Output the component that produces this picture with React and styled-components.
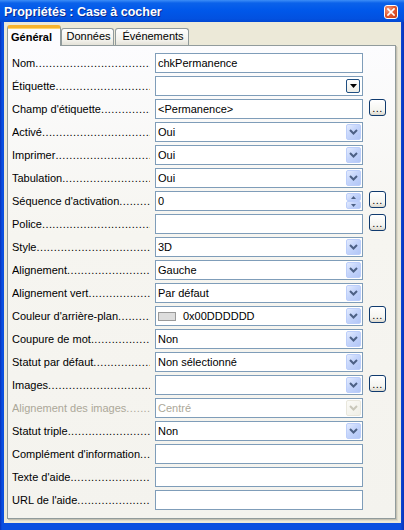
import React from 'react';
import styled, { createGlobalStyle } from 'styled-components';

const Global = createGlobalStyle`
  html, body { margin: 0; padding: 0; overflow: hidden; background: #0846d8; }
  * { box-sizing: border-box; }
`;

const FONT = `"Liberation Sans", Arial, sans-serif`;

const Window = styled.div`
  width: 404px;
  height: 530px;
  display: flex;
  flex-direction: column;
  background: linear-gradient(to right, #0831b8 0, #0a4fe0 2px, #0a4fe0 400px, #0831b8 404px);
  font-family: ${FONT};
  font-size: 11px;
  color: #000;
`;

const TitleBar = styled.div`
  height: 22px;
  flex: none;
  display: flex;
  align-items: center;
  padding: 1px 6px 0 4px;
  background: linear-gradient(to bottom, #3d8ef7 0, #0b62ea 3px, #0058ea 45%, #0251e0 85%, #0147d2 100%);
`;

const Title = styled.div`
  flex: 1;
  color: #fff;
  font-weight: bold;
  font-size: 12.5px;
  text-shadow: 1px 1px 0 #0a2a8c;
  white-space: nowrap;
`;

const CloseButton = styled.div`
  width: 14px;
  height: 14px;
  border: 1px solid #fff;
  border-radius: 3px;
  background: radial-gradient(circle at 30% 30%, #f39a7c 0, #e0542c 55%, #c23a14 100%);
  display: flex;
  align-items: center;
  justify-content: center;
`;

const Client = styled.div`
  flex: 1;
  margin: 0 3px 7px 4px;
  background: #ece9d8;
  padding: 3px 5px 4px 3px;
  display: flex;
  flex-direction: column;
  min-height: 0;
`;

const TabRow = styled.div`
  height: 20px;
  flex: none;
  display: flex;
  align-items: flex-end;
`;

const Tab = styled.div`
  position: relative;
  white-space: nowrap;
  ${(p) =>
    p.$active
      ? `
    z-index: 1;
    height: 21px;
    margin-bottom: -1px;
    padding: 3px 0 0 3px;
    width: 54px;
    font-weight: bold;
    background: #fcfcfe;
    border: 1px solid #919b9c;
    border-bottom: none;
    border-top: 3px solid #f7b32e;
    border-radius: 3px 3px 0 0;
    box-shadow: inset 0 1px 0 #ffd66b;
  `
      : `
    height: 17px;
    padding: 1px 0 0 2px;
    margin-left: ${p.$gap}px;
    width: ${p.$w}px;
    text-align: center;
    background: linear-gradient(to bottom, #fefefe, #f2f1eb 70%, #e4e2d8);
    border: 1px solid #919b9c;
    border-bottom: none;
    border-radius: 3px 3px 0 0;
  `}
`;

const Panel = styled.div`
  flex: 1;
  border: 1px solid #919b9c;
  background: linear-gradient(to bottom, #fcfcfe 0, #f6f5f0 40%, #f4f3ee 100%);
  box-shadow: 1px 1px 0 #c4c1b2, 2px 2px 0 #dedbcd;
  padding: 7px 0 0 4px;
  display: flex;
  flex-direction: column;
  gap: 3px;
`;

const Row = styled.div`
  height: 20px;
  display: flex;
  align-items: center;
`;

const Label = styled.div`
  width: 143px;
  padding-right: 5px;
  display: flex;
  overflow: hidden;
  white-space: nowrap;
  color: ${(p) => (p.$disabled ? '#aca899' : '#000')};
`;

const LabelText = styled.span`
  flex: none;
`;

const Leader = styled.span`
  flex: 1 1 0;
  min-width: 0;
  overflow: hidden;
  letter-spacing: 0.4px;
`;

const Field = styled.div`
  width: 208px;
  height: 20px;
  border: 1px solid #7f9db9;
  background: #fff;
  display: flex;
  align-items: center;
  padding: 0 1px 0 1px;
  color: ${(p) => (p.$disabled ? '#aca899' : '#000')};
`;

const Value = styled.span`
  flex: 1;
  padding-left: 1px;
  white-space: nowrap;
`;

const ComboButton = styled.div`
  width: 15px;
  height: 16px;
  flex: none;
  border: 1px solid ${(p) => (p.$disabled ? '#e9e7dc' : '#bccefa')};
  border-radius: 2px;
  background: ${(p) =>
    p.$disabled
      ? 'linear-gradient(135deg, #fbfbf7, #efeee6)'
      : 'linear-gradient(135deg, #e3ebfe 0, #c5d5fb 45%, #b2c6f6 100%)'};
  display: flex;
  align-items: center;
  justify-content: center;
`;

const ListButton = styled.div`
  width: 14px;
  height: 14px;
  flex: none;
  margin-right: 1px;
  border: 1px solid #1f4f82;
  border-radius: 2px;
  background: linear-gradient(to bottom, #ffffff, #eeede6);
  display: flex;
  align-items: center;
  justify-content: center;
`;

const SpinBox = styled.div`
  width: 15px;
  height: 16px;
  flex: none;
  display: flex;
  flex-direction: column;
`;

const SpinHalf = styled.div`
  flex: 1;
  border: 1px solid #bccefa;
  border-radius: 2px;
  background: linear-gradient(135deg, #e3ebfe 0, #c5d5fb 45%, #b2c6f6 100%);
  display: flex;
  align-items: center;
  justify-content: center;
`;

const Swatch = styled.span`
  width: 18px;
  height: 9px;
  margin: 0 6px 0 1px;
  border: 1px solid #9a9a9a;
  background: #dddddd;
  flex: none;
`;

const MoreButton = styled.div`
  width: 17px;
  height: 17px;
  margin-left: 6px;
  align-self: flex-start;
  border: 1px solid #0f3a6e;
  border-radius: 3px;
  background: linear-gradient(to bottom, #ffffff 0, #f4f4ef 70%, #dcd8cc 100%);
  display: flex;
  align-items: flex-end;
  justify-content: center;
  padding-bottom: 2px;
  line-height: 9px;
  font-size: 11px;
  letter-spacing: 0.5px;
`;

const Chevron = ({ disabled }) => (
  <svg width="9" height="6" viewBox="0 0 9 6">
    <path d="M1 1 L4.5 4.5 L8 1" fill="none" stroke={disabled ? '#c9c7ba' : '#4d6185'} strokeWidth="2" />
  </svg>
);

const DOTS = '.'.repeat(60);

const rows = [
  { label: 'Nom', kind: 'text', value: 'chkPermanence' },
  { label: 'Étiquette', kind: 'list' },
  { label: "Champ d'étiquette", kind: 'text', value: '<Permanence>', more: true },
  { label: 'Activé', kind: 'select', value: 'Oui' },
  { label: 'Imprimer', kind: 'select', value: 'Oui' },
  { label: 'Tabulation', kind: 'select', value: 'Oui' },
  { label: "Séquence d'activation", kind: 'spin', value: '0', more: true },
  { label: 'Police', kind: 'text', value: '', more: true },
  { label: 'Style', kind: 'select', value: '3D' },
  { label: 'Alignement', kind: 'select', value: 'Gauche' },
  { label: 'Alignement vert', kind: 'select', value: 'Par défaut' },
  { label: "Couleur d'arrière-plan", kind: 'color', value: '0x00DDDDDD', more: true },
  { label: 'Coupure de mot', kind: 'select', value: 'Non' },
  { label: 'Statut par défaut', kind: 'select', value: 'Non sélectionné' },
  { label: 'Images', kind: 'select', value: '', more: true },
  { label: 'Alignement des images', kind: 'select', value: 'Centré', disabled: true },
  { label: 'Statut triple', kind: 'select', value: 'Non' },
  { label: "Complément d'information", kind: 'text', value: '' },
  { label: "Texte d'aide", kind: 'text', value: '' },
  { label: "URL de l'aide", kind: 'text', value: '' },
];

const renderField = (r) => {
  switch (r.kind) {
    case 'list':
      return (
        <Field>
          <Value />
          <ListButton>
            <svg width="7" height="4" viewBox="0 0 7 4">
              <path d="M0 0 H7 L3.5 4 Z" fill="#000" />
            </svg>
          </ListButton>
        </Field>
      );
    case 'select':
      return (
        <Field $disabled={r.disabled}>
          <Value>{r.value}</Value>
          <ComboButton $disabled={r.disabled}>
            <Chevron disabled={r.disabled} />
          </ComboButton>
        </Field>
      );
    case 'color':
      return (
        <Field>
          <Swatch />
          <Value>{r.value}</Value>
          <ComboButton>
            <Chevron />
          </ComboButton>
        </Field>
      );
    case 'spin':
      return (
        <Field>
          <Value>{r.value}</Value>
          <SpinBox>
            <SpinHalf>
              <svg width="5" height="3" viewBox="0 0 5 3">
                <path d="M0 3 L2.5 0 L5 3 Z" fill="#4d6185" />
              </svg>
            </SpinHalf>
            <SpinHalf>
              <svg width="5" height="3" viewBox="0 0 5 3">
                <path d="M0 0 L2.5 3 L5 0 Z" fill="#4d6185" />
              </svg>
            </SpinHalf>
          </SpinBox>
        </Field>
      );
    default:
      return (
        <Field>
          <Value>{r.value}</Value>
        </Field>
      );
  }
};

export default function App() {
  return (
    <>
      <Global />
      <Window>
        <TitleBar>
          <Title>Propriétés : Case à cocher</Title>
          <CloseButton>
            <svg width="8" height="8" viewBox="0 0 8 8">
              <path d="M1 1 L7 7 M7 1 L1 7" stroke="#fff" strokeWidth="1.7" strokeLinecap="square" />
            </svg>
          </CloseButton>
        </TitleBar>
        <Client>
          <TabRow>
            <Tab $active>Général</Tab>
            <Tab $w={53} $gap={0}>Données</Tab>
            <Tab $w={74} $gap={1}>Événements</Tab>
          </TabRow>
          <Panel>
            {rows.map((r) => (
              <Row key={r.label}>
                <Label $disabled={r.disabled}>
                  <LabelText>{r.label}</LabelText>
                  <Leader>{DOTS}</Leader>
                </Label>
                {renderField(r)}
                {r.more && <MoreButton>...</MoreButton>}
              </Row>
            ))}
          </Panel>
        </Client>
      </Window>
    </>
  );
}
